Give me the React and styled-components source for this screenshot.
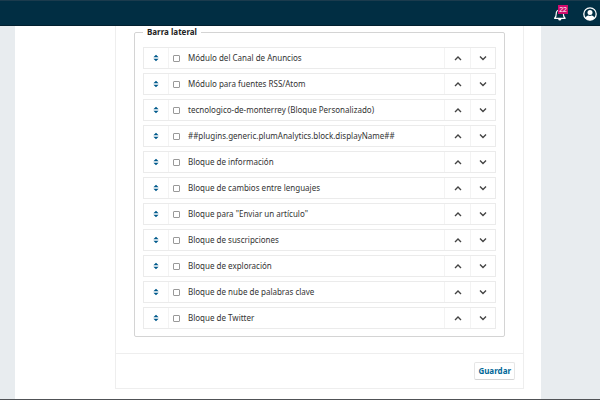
import React from "react";
import styled, { createGlobalStyle } from "styled-components";

const GlobalStyle = createGlobalStyle`
  *, *::before, *::after { box-sizing: border-box; }
  body {
    margin: 0;
    background: #e8ecef;
    color: #333;
    font-family: "Noto Sans", "Open Sans", sans-serif;
    font-size: 8px;
    line-height: 12px;
  }
`;

const Page = styled.div`
  display: flex;
  flex-direction: column;
  min-height: 100vh;
  border-bottom: 1px solid #505256;
`;

const TopBar = styled.header`
  display: flex;
  justify-content: flex-end;
  align-items: center;
  gap: 17px;
  height: 26px;
  padding: 2px 3px 0 0;
  background: #012e43;
  border-top: 1px solid #1b3b4d;
  border-bottom: 1px solid #02202f;
`;

const IconButton = styled.button`
  position: relative;
  display: flex;
  padding: 0;
  border: 0;
  background: none;
  color: #fff;
  cursor: pointer;
`;

const Badge = styled.span`
  position: absolute;
  top: -3px;
  right: -2px;
  padding: 0 1px;
  background: #d00a6c;
  color: #fff;
  font-size: 7px;
  line-height: 9px;
`;

const Workspace = styled.main`
  flex: 1;
  margin: 0 59px 0 15px;
  padding: 0 17px 9px 100px;
  background: #fff;
`;

const Panel = styled.form`
  border: 1px solid #eee;
  border-top: 0;
`;

const PanelBody = styled.div`
  padding: 0 18px 16px;
`;

const Group = styled.fieldset`
  min-width: 0;
  margin: 0;
  padding: 9px 8px 7px;
  border: 1px solid #d4d4d4;
  border-radius: 2px;
`;

const GroupTitle = styled.legend`
  padding: 0 4px;
  color: #222;
  font-weight: 700;
`;

const BlockList = styled.ul`
  display: grid;
  gap: 4px;
  margin: 0;
  padding: 0;
  list-style: none;
`;

const BlockRow = styled.li`
  display: grid;
  grid-template-columns: 24px 1fr 26px 25px;
  height: 22px;
  border: 1px solid #ebebeb;
`;

const RowButton = styled.button`
  display: flex;
  align-items: center;
  justify-content: center;
  padding: 0;
  border: 0;
  border-left: ${({ $divided }) => ($divided ? "1px solid #f3f3f3" : "0")};
  background: none;
  color: ${({ $divided }) => ($divided ? "#444" : "#005a8c")};
  cursor: pointer;
`;

const BlockLabel = styled.label`
  display: flex;
  align-items: center;
  gap: 8px;
  min-width: 0;
  padding-left: 4px;
  border-left: 1px solid #f3f3f3;
  white-space: nowrap;
`;

const Checkbox = styled.input`
  appearance: none;
  flex: none;
  width: 7px;
  height: 7px;
  margin: 1px 0 0;
  border: 1px solid #999;
  border-radius: 1px;
  background: #fff;

  &:checked { background: #006798; }
`;

const PanelFooter = styled.footer`
  display: flex;
  justify-content: flex-end;
  padding: 8px;
  border-top: 1px solid #eee;
`;

const SaveButton = styled.button`
  padding: 2px 3px;
  border: 1px solid #e6e6e6;
  border-bottom-color: #d4d4d4;
  border-radius: 2px;
  background: #fff;
  color: #006798;
  font: inherit;
  font-weight: 700;
  cursor: pointer;
`;

const BLOCKS = [
  "Módulo del Canal de Anuncios",
  "Módulo para fuentes RSS/Atom",
  "tecnologico-de-monterrey (Bloque Personalizado)",
  "##plugins.generic.plumAnalytics.block.displayName##",
  "Bloque de información",
  "Bloque de cambios entre lenguajes",
  'Bloque para "Enviar un artículo"',
  "Bloque de suscripciones",
  "Bloque de exploración",
  "Bloque de nube de palabras clave",
  "Bloque de Twitter",
];

const BellIcon = () => (
  <svg width="13" height="13" viewBox="0 0 13 13" fill="none" stroke="currentColor" strokeWidth="1.2" strokeLinejoin="round" aria-hidden="true">
    <path d="M1.6 10.3C3 9 3.2 7.7 3.2 5.9C3.2 3.6 4.6 2 6.8 2S10.4 3.6 10.4 5.9C10.4 7.7 10.7 9 12.1 10.3Z" />
    <path d="M5.2 10.9h3.2a1.6 1.6 0 0 1-3.2 0Z" fill="currentColor" stroke="none" />
  </svg>
);

const UserIcon = () => (
  <svg width="14" height="14" viewBox="0 0 14 14" aria-hidden="true">
    <circle cx="7" cy="7" r="6.2" fill="none" stroke="currentColor" strokeWidth="1.3" />
    <circle cx="7" cy="5.5" r="2.5" fill="currentColor" />
    <path d="M2.4 11.2C3 9.2 4.2 8.6 5.3 8.5Q7 9.3 8.7 8.5C9.8 8.6 11 9.2 11.6 11.2A6.2 6.2 0 0 1 2.4 11.2Z" fill="currentColor" />
  </svg>
);

const SortIcon = () => (
  <svg width="6" height="8" viewBox="0 0 6 8" fill="currentColor" aria-hidden="true">
    <path d="M3 .7 5.6 3.3H.4ZM3 7.3.4 4.7h5.2Z" />
  </svg>
);

const Chevron = ({ down }) => (
  <svg width="8" height="6" viewBox="0 0 8 6" fill="none" stroke="currentColor" strokeWidth="1.4" aria-hidden="true">
    <path d={down ? "M1 1.4 4 4.4 7 1.4" : "M1 4.9 4 1.9 7 4.9"} />
  </svg>
);

export default function App() {
  return (
    <>
      <GlobalStyle />
      <Page>
        <TopBar>
          <IconButton type="button" aria-label="Notificaciones">
            <BellIcon />
            <Badge>22</Badge>
          </IconButton>
          <IconButton type="button" aria-label="Usuario">
            <UserIcon />
          </IconButton>
        </TopBar>
        <Workspace>
          <Panel onSubmit={(event) => event.preventDefault()}>
            <PanelBody>
              <Group>
                <GroupTitle>Barra lateral</GroupTitle>
                <BlockList>
                  {BLOCKS.map((name) => (
                    <BlockRow key={name}>
                      <RowButton type="button" aria-label={`Ordenar ${name}`}>
                        <SortIcon />
                      </RowButton>
                      <BlockLabel>
                        <Checkbox type="checkbox" />
                        {name}
                      </BlockLabel>
                      <RowButton type="button" $divided aria-label={`Subir ${name}`}>
                        <Chevron />
                      </RowButton>
                      <RowButton type="button" $divided aria-label={`Bajar ${name}`}>
                        <Chevron down />
                      </RowButton>
                    </BlockRow>
                  ))}
                </BlockList>
              </Group>
            </PanelBody>
            <PanelFooter>
              <SaveButton type="submit">Guardar</SaveButton>
            </PanelFooter>
          </Panel>
        </Workspace>
      </Page>
    </>
  );
}
